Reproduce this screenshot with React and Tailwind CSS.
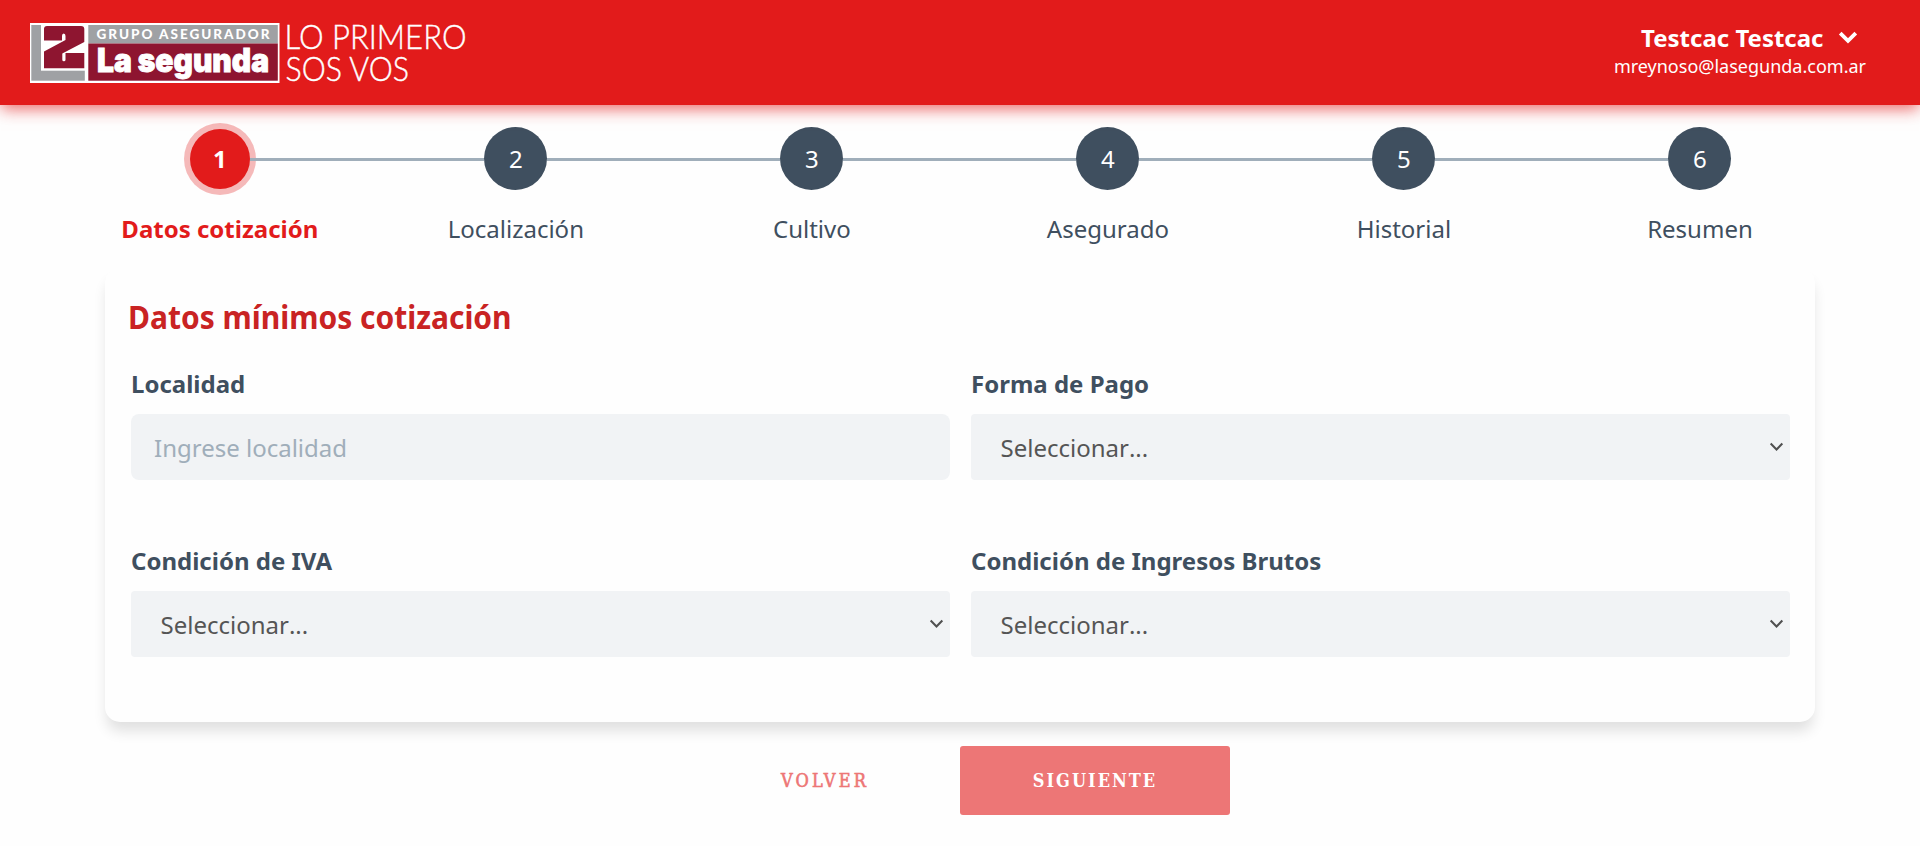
import React from "react";

const steps = ["Datos cotización", "Localización", "Cultivo", "Asegurado", "Historial", "Resumen"];

function Logo() {
  return (
    <svg width="440" height="80" viewBox="28 13 440 80" className="block overflow-visible">
      <rect x="30" y="23" width="249.5" height="60" fill="#fff" />
      <rect x="31.3" y="25" width="53.5" height="55.7" fill="#9fa1a4" />
      <rect x="41" y="24" width="44.5" height="46.7" fill="#fff" />
      <path d="M47 26H81Q84.3 26 84.3 29V42L62.3 53.5V59.8Q62.3 61.3 63.9 61.3Q65.5 61.3 65.5 59.8V53H84.3V68.3H44V51.5L65.5 40V36Q65.5 33.5 63.7 33.5Q62 33.5 62 36V40.5H44V29Q44 26 47 26Z" fill="#8e1530" />
      <rect x="88.3" y="25" width="189.5" height="18.5" fill="#9fa1a4" />
      <rect x="88.3" y="43.5" width="189.5" height="37.2" fill="#8e1530" />
      <g fill="#fff">
        <text x="96.5" y="39.3" fontFamily="Lato, sans-serif" fontWeight="900" fontSize="13.5" textLength="173">GRUPO ASEGURADOR</text>
        <text x="97" y="71.7" fontFamily="Inter, sans-serif" fontWeight="900" fontSize="32.5" stroke="#fff" strokeWidth="0.9" textLength="172" lengthAdjust="spacingAndGlyphs">La segunda</text>
        <text x="284.5" y="48.7" fontFamily="Lato, sans-serif" fontWeight="300" fontSize="32.5" stroke="#fff" strokeWidth="0.4" textLength="182" lengthAdjust="spacingAndGlyphs">LO PRIMERO</text>
        <text x="285.5" y="80.5" fontFamily="Lato, sans-serif" fontWeight="300" fontSize="32.5" stroke="#fff" strokeWidth="0.4" textLength="123.5" lengthAdjust="spacingAndGlyphs">SOS VOS</text>
      </g>
    </svg>
  );
}

function Chevron({ className, size, width }) {
  return (
    <svg className={className} width={size} height={size} viewBox="0 0 18 18" fill="none" stroke="currentColor" strokeWidth={width}>
      <path d="M2 5.5L9 12.5L16 5.5" />
    </svg>
  );
}

function Field({ label, children }) {
  return (
    <div className="flex h-[177px] flex-col">
      <label className="h-[47px] text-2xl leading-[33px] font-bold text-[#3f4f5f]">{label}</label>
      {children}
    </div>
  );
}

function Select() {
  return (
    <div className="flex h-[66px] items-center justify-between rounded bg-[#f1f3f5] pr-[6px] pl-[29.5px] text-2xl text-[#555]">
      <span className="pt-[2px] [font-kerning:none]">Seleccionar...</span>
      <Chevron size={15} width={2.5} className="-mt-px text-[#505050]" />
    </div>
  );
}

export default function App() {
  return (
    <div className="flex h-[846px] flex-col overflow-hidden bg-[#fefefe] font-['Noto_Sans',sans-serif]">
      <header className="relative z-20 flex h-[105px] shrink-0 justify-between bg-[#e21b1b] pt-[13px] pr-[54px] pl-[28px] shadow-[0_5px_15px_-1px_rgba(226,27,27,0.65)]">
        <Logo />
        <div className="flex flex-col items-end pt-2 text-white">
          <div className="mr-[8px] flex h-[34px] items-center gap-[14.5px] text-2xl leading-[34px] font-bold">
            Testcac Testcac
            <Chevron size={20} width={3.4} className="-mt-[3px]" />
          </div>
          <div className="-mt-px text-lg leading-6">mreynoso@lasegunda.com.ar</div>
        </div>
      </header>

      <nav className="relative z-10 h-[163px] shrink-0 bg-[#fefefe] pt-[22px] pr-[72px] pl-[71.8px]">
        <div className="grid grid-cols-6">
          {steps.map((label, i) => (
            <div key={label} className="flex flex-col items-center">
              <div className="flex h-[63px] w-full items-center">
                <span className={i === 0 ? "h-[3px] flex-1" : "mt-[2px] h-[3px] flex-1 bg-[#a0aeba]"} />
                <span
                  className={
                    i === 0
                      ? "flex size-[60px] items-center justify-center rounded-full bg-[#e21b1b] text-2xl font-bold text-white shadow-[0_0_0_6px_rgba(226,27,27,0.3)]"
                      : "flex size-[63px] items-center justify-center rounded-full bg-[#3f4f5f] text-2xl text-white"
                  }
                >
                  {i + 1}
                </span>
                <span className={i === 5 ? "h-[3px] flex-1" : "mt-[2px] h-[3px] flex-1 bg-[#a0aeba]"} />
              </div>
              <span className={i === 0 ? "mt-[23px] text-2xl font-bold text-[#e21b1b]" : "mt-[23px] text-2xl text-[#3f4f5f]"}>{label}</span>
            </div>
          ))}
        </div>
      </nav>

      <main className="mx-[105px] h-[454px] shrink-0 rounded-[15px] bg-[#fefefe] pt-[27px] pr-[25px] pl-[26px] shadow-[0_11px_14px_-2px_rgba(0,0,0,0.12)]">
        <h1 className="ml-[-3.5px] h-[72px] w-max origin-left scale-x-[0.937] text-[32px] leading-[44px] font-bold text-[#c92323]">
          Datos mínimos cotización
        </h1>
        <div className="grid grid-cols-2 gap-x-[21px]">
          <Field label="Localidad">
            <div className="flex h-[66px] items-center rounded-lg bg-[#f1f3f5] pl-[23px] text-2xl text-[#a0aeba]">
              <span className="pt-[2px]">Ingrese localidad</span>
            </div>
          </Field>
          <Field label="Forma de Pago"><Select /></Field>
          <Field label="Condición de IVA"><Select /></Field>
          <Field label="Condición de Ingresos Brutos"><Select /></Field>
        </div>
      </main>

      <footer className="mt-[24px] flex h-[69px] shrink-0 pl-[690px] font-['DejaVu_Serif_Condensed','DejaVu_Serif',serif] text-lg">
        <button className="w-[270px] tracking-[3.2px] text-[#ed7676] [-webkit-text-stroke:0.6px_#ed7676]">VOLVER</button>
        <button className="w-[270px] rounded-[3px] bg-[#ed7676] font-bold tracking-[2px] text-white">SIGUIENTE</button>
      </footer>
    </div>
  );
}
